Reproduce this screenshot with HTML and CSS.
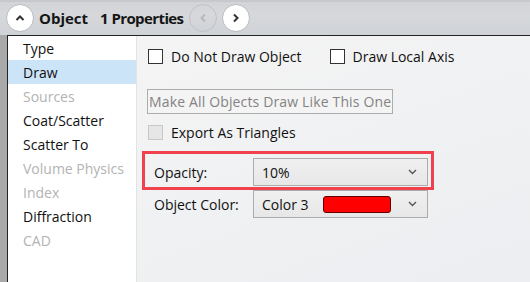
FILE: index.html
```html
<!DOCTYPE html>
<html lang="en">
<head>
  <meta charset="UTF-8" />
  <title>Object Properties</title>
  <link rel="stylesheet" href="styles.css">
</head>
<body>
  <div class="panel">

    <!-- Шапка панели -->
    <div class="header">
      <span class="round-btn collapse">
        <svg width="10" height="6" viewBox="0 0 10 6"><polyline points="1.5,5 5,1.5 8.5,5" fill="none" stroke="#333" stroke-width="2"/></svg>
      </span>
      <span class="title">Object</span>
      <span class="title count">1 Properties</span>
      <span class="round-btn nav disabled">
        <svg width="6" height="10" viewBox="0 0 6 10"><polyline points="5,1.5 1.5,5 5,8.5" fill="none" stroke="#b8b8b8" stroke-width="2"/></svg>
      </span>
      <span class="round-btn nav">
        <svg width="6" height="10" viewBox="0 0 6 10"><polyline points="1,1.5 4.5,5 1,8.5" fill="none" stroke="#333" stroke-width="2"/></svg>
      </span>
    </div>

    <div class="body">
      <div class="frame">
        <!-- Список разделов -->
        <ul class="sections">
          <li>Type</li>
          <li class="selected">Draw</li>
          <li class="off">Sources</li>
          <li>Coat/Scatter</li>
          <li>Scatter To</li>
          <li class="off">Volume Physics</li>
          <li class="off">Index</li>
          <li>Diffraction</li>
          <li class="off">CAD</li>
        </ul>

        <!-- Настройки раздела Draw -->
        <div class="content">
          <div class="check-row">
            <label class="check"><span class="box"></span>Do Not Draw Object</label>
            <label class="check"><span class="box"></span>Draw Local Axis</label>
          </div>
          <button class="btn" disabled>Make All Objects Draw Like This One</button>
          <label class="check disabled"><span class="box"></span>Export As Triangles</label>

          <div class="field highlight">
            <span class="field-label">Opacity:</span>
            <div class="combo">
              <span class="combo-text">10%</span>
              <svg class="chev" width="9" height="6" viewBox="0 0 9 6"><polyline points="1,1 4.5,4.5 8,1" fill="none" stroke="#555" stroke-width="1.4"/></svg>
            </div>
          </div>
          <div class="field">
            <span class="field-label">Object Color:</span>
            <div class="combo">
              <span class="combo-text">Color 3</span>
              <span class="swatch"></span>
              <svg class="chev" width="9" height="6" viewBox="0 0 9 6"><polyline points="1,1 4.5,4.5 8,1" fill="none" stroke="#555" stroke-width="1.4"/></svg>
            </div>
          </div>
        </div>
      </div>
    </div>

  </div>
</body>
</html>
```

FILE: styles.css
```css
/* Общие настройки */
*, *::before, *::after { box-sizing: border-box; }
body {
  margin: 0;
  background: #a9a9a9;
  font-family: "Open Sans", "Noto Sans", sans-serif;
  font-size: 14px;
  color: #111;
  overflow: hidden;
}

.panel {
  display: flex;
  flex-direction: column;
  width: 530px;
  height: 282px;
}

/* Шапка */
.header {
  height: 35px;
  display: flex;
  align-items: center;
  padding: 0 0 1px 6px;
  background: linear-gradient(#d2d4d7, #d6d8db 40%, #cfd2d6);
  border-top: 2px solid #c6c8cb;
}
.round-btn {
  width: 28px;
  height: 28px;
  border-radius: 50%;
  display: inline-flex;
  align-items: center;
  justify-content: center;
  background: #fff;
  border: 1px solid #b9bbbe;
}
.round-btn.disabled {
  background: transparent;
  border-color: #c0c2c5;
}
.round-btn.nav { margin-left: 5px; }
.round-btn.nav.disabled { margin-left: 6px; }
.title {
  font-weight: 700;
  font-size: 15px;
  color: #161616;
  margin-left: 5px;
}
.title.count {
  margin-left: 12px;
  letter-spacing: -0.6px;
}

/* Тело */
.body {
  flex: 1;
  display: flex;
  padding-left: 7px;
  min-height: 0;
}
.frame {
  flex: 1;
  display: flex;
  border-top: 1px solid #222;
  border-left: 1px solid #222;
}

/* Список разделов */
.sections {
  list-style: none;
  margin: 0;
  padding: 0;
  width: 129px;
  background: #fff;
  border-right: 1px solid #e3e3e3;
}
.sections li {
  height: 24px;
  line-height: 25px;
  padding-left: 15px;
  color: #111;
}
.sections li.selected { background: #cce4f7; }
.sections li.off { color: #b3b3b3; }

/* Содержимое */
.content {
  flex: 1;
  display: flex;
  flex-direction: column;
  align-items: flex-start;
  padding: 8px 0 0 10px;
  background: linear-gradient(160deg, #f4f4f4, #eceef1);
}
.check-row {
  display: flex;
  height: 24px;
  gap: 27px;
}
.check {
  display: flex;
  align-items: center;
  height: 24px;
  margin-left: 1px;
}
.check .box {
  width: 15px;
  height: 15px;
  border: 1px solid #333;
  background: #fff;
  margin-right: 8px;
}
.check.disabled { height: 20px; margin-top: 8px; }
.check.disabled .box {
  background: #e6e6e6;
  border-color: #c8c8c8;
}

.btn {
  margin-top: 21px;
  height: 25px;
  padding: 0 1px;
  font-family: inherit;
  font-size: 14px;
  letter-spacing: 0.15px;
  color: #838383;
  background: #f4f4f4;
  border: 1px solid #adadad;
}

/* Поля с выпадающими списками */
.field {
  position: relative;
  display: flex;
  align-items: center;
  margin: 16px 0 0 7px;
}
.field + .field { margin-top: 4px; }
.field-label { width: 99px; }
.combo {
  width: 175px;
  height: 28px;
  display: flex;
  align-items: center;
  padding: 0 10px 0 8px;
  border: 1px solid #acacac;
  background: linear-gradient(#f0f0f0, #e7e7e7);
}
.combo-text { flex: 0 0 61px; }
.swatch {
  width: 68px;
  height: 17px;
  background: #ff0000;
  border: 1px solid #600000;
  border-radius: 3px;
}
.chev { margin-left: auto; }

/* Красная рамка-выделение поверх поля */
.field.highlight::after {
  content: "";
  position: absolute;
  left: -12px;
  right: -6px;
  top: -7px;
  bottom: -4px;
  border: 3px solid #f0414d;
}
```
